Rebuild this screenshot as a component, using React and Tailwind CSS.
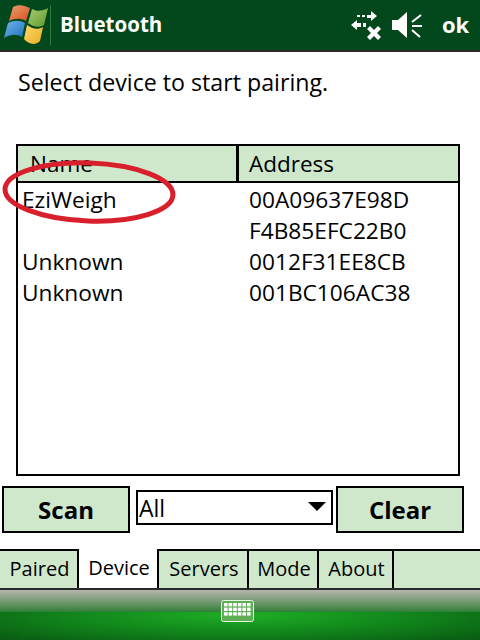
import React from "react";

const font = "font-['Open_Sans','Noto_Sans',sans-serif]";

const rows = [
  ["EziWeigh", "00A09637E98D"],
  ["", "F4B85EFC22B0"],
  ["Unknown", "0012F31EE8CB"],
  ["Unknown", "001BC106AC38"],
];

const tabs = ["Paired", "Device", "Servers", "Mode", "About"];
const tabWidths = ["w-[79px]", "w-[80px]", "w-[90px]", "w-[70px]", "w-[75px]"];

function StartLogo() {
  return (
    <svg width="44" height="40" viewBox="0 0 44 40">
      <defs>
        <linearGradient id="red" x1="0" y1="0" x2="1" y2="1">
          <stop offset="0" stopColor="#e8a070" />
          <stop offset="1" stopColor="#d84f20" />
        </linearGradient>
        <linearGradient id="grn" x1="0" y1="0" x2="1" y2="1">
          <stop offset="0" stopColor="#a8cc70" />
          <stop offset="1" stopColor="#5f9a30" />
        </linearGradient>
        <linearGradient id="blu" x1="0" y1="0" x2="1" y2="1">
          <stop offset="0" stopColor="#70b8e8" />
          <stop offset="1" stopColor="#1f6fc0" />
        </linearGradient>
        <linearGradient id="yel" x1="0" y1="0" x2="1" y2="1">
          <stop offset="0" stopColor="#f8dc70" />
          <stop offset="1" stopColor="#eeaa20" />
        </linearGradient>
      </defs>
      <path d="M9 2 C14 -1 20 0 26 3 L22 16 C17 13 11 13 5 16 Z" fill="url(#red)" />
      <path d="M28 4 C33 7 39 6 44 3 L40 20 C35 23 29 22 24 18 Z" fill="url(#grn)" />
      <path d="M4 18 C10 15 16 15 21 18 L18 32 C13 29 7 29 0 33 Z" fill="url(#blu)" />
      <path d="M23 20 C28 24 34 25 39 22 L36 36 C31 41 24 39 20 34 Z" fill="url(#yel)" />
    </svg>
  );
}

function NetIcon() {
  return (
    <svg width="32" height="32" viewBox="0 0 32 32" fill="#fff">
      <path d="M12 4H15V6H12ZM7 4H10V6H7ZM17 4H21V0L27 5L21 10V7H17Z" transform="translate(0 2)" />
      <path d="M11 12H7V9L1 14L7 19V16H11ZM13 12H16V16H13Z" transform="translate(0 2)" />
      <path d="M17 23L20 20L24 24L28 20L31 23L27 27L31 31L28 34L24 30L20 34L17 31L21 27Z" transform="translate(0 -3)" />
    </svg>
  );
}

function SpeakerIcon() {
  return (
    <svg width="32" height="28" viewBox="0 0 32 28" fill="none">
      <path d="M1 9H7L16 1V27L7 19H1Z" fill="#fff" />
      <path d="M21 11L30 4M21 15H31M21 19L29 26" stroke="#fff" strokeWidth="2" />
    </svg>
  );
}

function KeyboardIcon() {
  const keys = [];
  for (let y = 0; y < 3; y++) {
    for (let x = 0; x < 6; x++) {
      keys.push(<rect key={x + "-" + y} x={3 + x * 4.6} y={3 + y * 4.6} width="3.6" height="3.4" fill="#fff" />);
    }
  }
  return (
    <svg width="33" height="22" viewBox="0 0 33 22">
      <rect x="0.5" y="0.5" width="32" height="21" rx="2" fill="#5fae55" stroke="#e8f5e4" />
      {keys}
    </svg>
  );
}

export default function App() {
  return (
    <div className={`relative flex h-[640px] w-[480px] flex-col overflow-hidden bg-white text-black ${font}`}>
      <div className="flex h-[52px] items-center border-b-2 border-[#2a2a2a] bg-[#03481c] text-white">
        <div className="ml-[4px] flex w-[46px]">
          <StartLogo />
        </div>
        <div className="h-[40px] w-px bg-[#2c7a3c]" />
        <div className="ml-[9px] flex-1 pb-[1px] text-[20.5px] font-bold">Bluetooth</div>
        <div className="mr-[6px] flex items-center gap-[9px]">
          <NetIcon />
          <SpeakerIcon />
          <div className="ml-[10px] w-[32px] pb-[1px] text-[22px] font-bold">ok</div>
        </div>
      </div>

      <div className="ml-[18px] mt-[14px] h-[78px] text-[23.2px] leading-[32px]">Select device to start pairing.</div>

      <div className="mx-[16px] flex h-[332px] w-[444px] flex-col border-2 border-black">
        <div className="flex h-[37px] border-b-2 border-black bg-[#cfe8cc] text-[22.5px] leading-[35px]">
          <div className="w-[221px] border-r-[3px] border-black pl-[12px]">Name</div>
          <div className="pl-[10px]">Address</div>
        </div>
        <div className="flex flex-col pt-[1px]">
          {rows.map((r) => (
            <div key={r[1]} className="flex h-[31px] text-[22.7px] leading-[31px]">
              <div className="w-[231px] pl-[4px]">{r[0]}</div>
              <div>{r[1]}</div>
            </div>
          ))}
        </div>
      </div>

      <div className="mt-[10px] flex h-[47px] items-start">
        <button className="ml-[2px] h-[47px] w-[128px] border-2 border-black bg-[#cfe8cc] text-[24px] font-bold">Scan</button>
        <div className="relative ml-[6px] mt-[4px] h-[35px] w-[197px] border-2 border-black text-[23px] leading-[32px]">
          <span className="pl-[1px]">All</span>
          <div className="absolute right-[5px] top-[10px] h-0 w-0 border-x-[9px] border-t-[9px] border-x-transparent border-t-black" />
        </div>
        <button className="ml-[3px] h-[47px] w-[128px] border-2 border-black bg-[#cfe8cc] text-[24px] font-bold">Clear</button>
      </div>

      <div className="mt-[16px] flex h-[41px] border-b-2 border-[#2a2a2a] bg-[#cfe8cc] text-[20px]">
        {tabs.map((t, i) => (
          <div
            key={t}
            className={`${tabWidths[i]} flex items-center justify-center border-r-[2px] border-black pb-[2px] pl-[2px] ${t === "Device" ? "bg-white" : "border-t-[2px]"}`}
          >
            {t}
          </div>
        ))}
        <div className="flex-1 border-t-[2px] border-black" />
      </div>

      <div className="relative flex-1 bg-[radial-gradient(ellipse_at_center,#1fae26_0%,#128a1c_45%,#095a12_100%)]">
        <div className="h-[22px] bg-gradient-to-b from-[#b5b5ae] to-[#2f7f38]" />
        <div className="absolute left-[221px] top-[10px]">
          <KeyboardIcon />
        </div>
      </div>

      <svg className="absolute left-0 top-[155px]" width="182" height="74" viewBox="0 0 182 74" fill="none">
        <ellipse cx="89" cy="37" rx="84" ry="29" transform="rotate(2 89 37)" stroke="#d8202c" strokeWidth="5" />
      </svg>
    </div>
  );
}
